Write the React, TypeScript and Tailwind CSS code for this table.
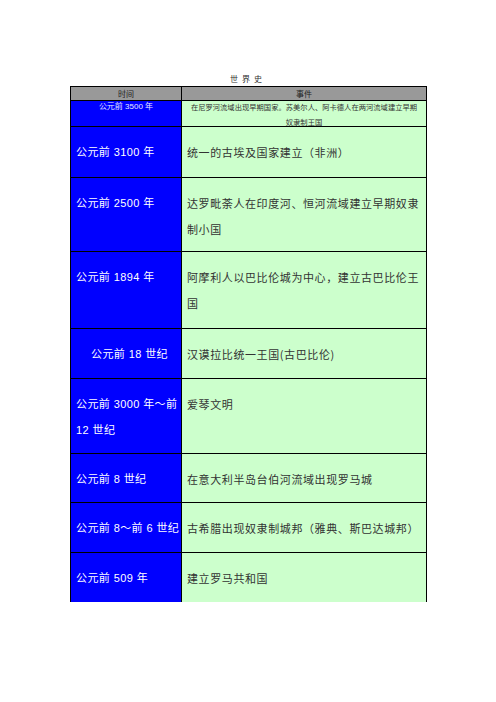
const rows: { h: number; time: string[]; event: string[]; indent?: boolean }[] = [
  { h: 51, time: ["公元前 3100 年"], event: ["统一的古埃及国家建立（非洲）"] },
  { h: 74, time: ["公元前 2500 年"], event: ["达罗毗荼人在印度河、恒河流域建立早期奴隶", "制小国"] },
  { h: 77, time: ["公元前 1894 年"], event: ["阿摩利人以巴比伦城为中心，建立古巴比伦王", "国"] },
  { h: 50, time: ["公元前 18 世纪"], event: ["汉谟拉比统一王国(古巴比伦)"], indent: true },
  { h: 75, time: ["公元前 3000 年～前", "12 世纪"], event: ["爱琴文明"] },
  { h: 49, time: ["公元前 8 世纪"], event: ["在意大利半岛台伯河流域出现罗马城"] },
  { h: 50, time: ["公元前 8～前 6 世纪"], event: ["古希腊出现奴隶制城邦（雅典、斯巴达城邦）"] },
];

const sans = "font-['Liberation_Sans','Noto_Sans_CJK_SC',sans-serif]";
const cjk = "font-['Noto_Sans_CJK_SC',sans-serif]";

export default function App() {
  return (
    <div className="w-[496px] h-[702px] bg-white overflow-hidden">
      {/* Title */}
      <div className={`pt-[74px] h-[86px] text-center text-[8px] leading-[10px] tracking-[4px] text-[#333] ${cjk}`}>
        世界史
      </div>

      <div className="ml-[70px] w-[357px] border-x border-black">
        {/* Header */}
        <div className={`flex h-[14px] border-t border-black bg-[#999999] text-[8px] leading-[13px] text-[#222] ${cjk}`}>
          <div className="w-[111px] border-r border-black text-center">时间</div>
          <div className="flex-1 text-center">事件</div>
        </div>

        {/* First row, small print */}
        <div className="flex h-[26px] border-t border-black">
          <div className={`w-[111px] border-r border-black bg-[#0000ff] text-center text-[8px] leading-[12px] text-[#e8e8ff] ${sans}`}>
            公元前 3500 年
          </div>
          <div className={`flex-1 bg-[#ccffcc] px-[3px] text-center text-[7.3px] leading-[16px] text-[#333] ${cjk}`}>
            <div className="whitespace-nowrap -mt-[2px]">在尼罗河流域出现早期国家。苏美尔人、阿卡德人在两河流域建立早期</div>
            <div className="-mt-[1px]">奴隶制王国</div>
          </div>
        </div>

        {rows.map((r, i) => (
          <div key={i} className="flex border-t border-black" style={{ height: r.h }}>
            <div
              className={`w-[111px] border-r border-black bg-[#0000ff] pt-[12px] text-[11px] leading-[26px] text-white ${sans} ${
                r.indent ? "pl-[20px]" : "pl-[5px]"
              }`}
            >
              {r.time.map((t, j) => (
                <div key={j} className="whitespace-nowrap tracking-[0.4px]">{t}</div>
              ))}
            </div>
            <div className={`flex-1 bg-[#ccffcc] pl-[5px] pt-[12px] text-[11px] leading-[26px] tracking-[0.6px] text-[#333] ${cjk}`}>
              {r.event.map((t, j) => (
                <div key={j} className="whitespace-nowrap">{t}</div>
              ))}
            </div>
          </div>
        ))}

        {/* Last row, cut off at page end */}
        <div className="flex h-[50px] border-t border-black">
          <div className={`w-[111px] border-r border-black bg-[#0000ff] pl-[5px] pt-[12px] text-[11px] leading-[26px] tracking-[0.4px] text-white ${sans}`}>
            公元前 509 年
          </div>
          <div className={`flex-1 bg-[#ccffcc] pl-[5px] pt-[12px] text-[11px] leading-[26px] tracking-[0.6px] text-[#333] ${cjk}`}>
            建立罗马共和国
          </div>
        </div>
      </div>
    </div>
  );
}
